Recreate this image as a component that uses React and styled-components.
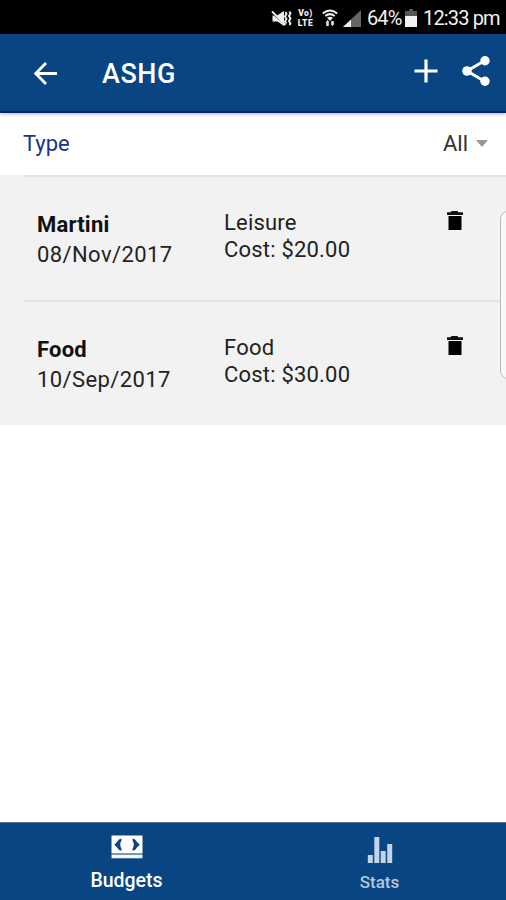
import React from 'react'
import styled, { createGlobalStyle } from 'styled-components'

const GlobalStyle = createGlobalStyle`
  * {
    box-sizing: border-box;
  }
  body {
    margin: 0;
    background: #fff;
    font-family: Roboto, 'Noto Sans', sans-serif;
    overflow: hidden;
  }
  svg {
    display: block;
    flex: none;
  }
`
const Screen = styled.div`
  position: relative;
  display: flex;
  flex-direction: column;
  width: 506px;
  height: 900px;
  background: #fff;
  overflow: hidden;
`
const StatusBar = styled.div`
  display: flex;
  flex: none;
  align-items: center;
  height: 34px;
  padding: 2px 0 0 271px;
  background: #000;
  color: #f2f2f2;
`
const StatusIcon = styled.svg`
  margin-right: ${(props) => props.$gap}px;
`
const Network = styled.div`
  display: flex;
  flex-direction: column;
  width: 19px;
  margin-right: 7px;
  font-size: 8.5px;
  font-weight: 900;
  line-height: 10px;
  letter-spacing: 0.5px;
  text-align: center;
`
const StatusText = styled.span`
  width: ${(props) => props.$width}px;
  margin-right: 4px;
  font-size: 20px;
  line-height: 24px;
  letter-spacing: ${(props) => props.$spacing}px;
  white-space: nowrap;
`
const Header = styled.header`
  position: relative;
  z-index: 1;
  display: flex;
  flex: none;
  align-items: center;
  height: 79px;
  padding: 0 15px 0 33px;
  border-bottom: 2px solid #06207a;
  background: #084582;
  box-shadow: 0 1px 4px rgba(0, 0, 0, 0.3);
  color: #fff;
`
const Title = styled.h1`
  flex: 1;
  margin: 3px 0 0 44px;
  font-size: 27px;
  font-weight: 500;
  line-height: 32px;
  letter-spacing: 0.5px;
`
const HeaderActions = styled.div`
  display: flex;
  align-items: center;
  gap: 23px;
  padding-bottom: 3px;
`
const Filter = styled.div`
  display: flex;
  flex: none;
  align-items: center;
  justify-content: space-between;
  height: 62px;
  margin-left: 23px;
  padding: 0 18px 2px 0;
`
const FilterLabel = styled.span`
  color: #1b3485;
  font-size: 22px;
`
const Select = styled.div`
  display: flex;
  align-items: center;
  gap: 8px;
  color: #333;
  font-size: 22px;
`
const Arrow = styled.i`
  border: 6.5px solid transparent;
  border-top: 7px solid #999;
  border-bottom: 0;
`
const List = styled.div`
  background: #f2f2f2;
`
const Item = styled.div`
  display: grid;
  grid-template-columns: 187px 1fr 18px;
  height: 125px;
  margin-left: 24px;
  padding: 34px 42px 0 13px;
  border-top: 2px solid #e3e3e3;
  color: #222;
  font-size: 22px;
`
const Details = styled.div`
  margin-top: -${(props) => props.$lift}px;
`
const Name = styled.div`
  color: #111;
  font-weight: 700;
  line-height: 30px;
  letter-spacing: 0.2px;
`
const Line = styled.div`
  line-height: ${(props) => props.$height || 27}px;
  letter-spacing: ${(props) => props.$spacing || 0}px;
  white-space: nowrap;
`
const Handle = styled.div`
  position: absolute;
  top: 211px;
  left: 500px;
  width: 20px;
  height: 168px;
  border: 1px solid #bbb;
  border-radius: 8px;
  background: #f8f8f8;
`
const TabBar = styled.nav`
  display: grid;
  grid-template-columns: 1fr 1fr;
  height: 78px;
  margin-top: auto;
  border-top: 1px solid #5c7392;
  background: #084582;
`
const Tab = styled.div`
  display: flex;
  flex-direction: column;
  align-items: center;
  color: ${(props) => (props.$active ? '#fff' : '#b4c7dc')};
`
const TabLabel = styled.span`
  margin-top: ${(props) => props.$top}px;
  font-size: ${(props) => props.$size}px;
  font-weight: 500;
  line-height: 24px;
`

const items = [
  { name: 'Martini', date: '08/Nov/2017', type: 'Leisure', cost: '$20.00' },
  { name: 'Food', date: '10/Sep/2017', type: 'Food', cost: '$30.00' },
]

const Trash = () => (
  <svg width="18" height="20" viewBox="0 0 18 20">
    <path d="M5.5 0h6l1 1.3H17V4H1V1.3h3.5z" fill="#111" />
    <path d="M2.5 5h13v13.5q0 .5-.5.5H3q-.5 0-.5-.5z" />
  </svg>
)

export default function App() {
  return (
    <>
      <GlobalStyle />
      <Screen>
        <StatusBar>
          <StatusIcon $gap={4} width="21" height="18" viewBox="0 0 21 18">
            <path d="M1.5 6.5H6L13 2v15l-6.5-4.5h-5z" fill="#eee" />
            <path d="M1 4l12 10.5" stroke="#000" strokeWidth="1.2" />
            <path d="M1 2.5L14.5 16" stroke="#eee" strokeWidth="1.8" />
            <path
              d="M14.5 3l1 2-1.5 2.5 1.5 2.5-1.5 2.5 1.5 2M18.5 2.5l1 2-1.5 2.5 1.5 2.5-1.5 2.5 1.5 2.5-1 1.5"
              fill="none"
              stroke="#eee"
              strokeWidth="1.9"
            />
          </StatusIcon>
          <Network>
            <span>Vo)</span>
            <span>LTE</span>
          </Network>
          <StatusIcon $gap={5} width="16" height="18" viewBox="0 0 16 18">
            <path
              d="M.8 4.5q7.2-6 14.4 0M3.3 7q4.7-3.8 9.4 0"
              fill="none"
              stroke="#eee"
              strokeWidth="2"
            />
            <path d="M5 8.8q3-2 6 0L8 12z" fill="#eee" />
            <path d="M3.5 13.5L5.5 11l2 2.5h-.7V17H4.2v-3.5zM8.5 14.5h.7V12h2.6v2.5h.7l-2 2.7z" fill="#ddd" />
          </StatusIcon>
          <StatusIcon $gap={6} width="18" height="17" viewBox="0 0 18 17">
            <path d="M18 0v17H0z" fill="#666" />
            <path d="M8 9.4V17H0z" fill="#eee" />
          </StatusIcon>
          <StatusText $width={34} $spacing={-0.9}>
            64%
          </StatusText>
          <StatusIcon $gap={6} width="12" height="18" viewBox="0 0 12 18">
            <path d="M4 0h4v2h4v5H0V2h4z" fill="#555" />
            <path d="M0 7h12v11H0z" fill="#f2f2f2" />
          </StatusIcon>
          <StatusText $width={78} $spacing={-0.85}>
            12:33 pm
          </StatusText>
        </StatusBar>
        <Header>
          <svg width="25" height="24" viewBox="0 0 25 24">
            <path
              d="M24 12.5H3M13 2L2.7 12.5 13 23"
              fill="none"
              stroke="#fff"
              strokeWidth="2.8"
            />
          </svg>
          <Title>ASHG</Title>
          <HeaderActions>
            <svg width="24" height="24" viewBox="0 0 24 24">
              <path d="M12 .5v23M.5 12h23" stroke="#fff" strokeWidth="3.2" />
            </svg>
            <svg width="30" height="32" viewBox="0 0 30 32">
              <path d="M24 5.5L6 16l18 10.5" fill="none" stroke="#fff" strokeWidth="3" />
              <circle cx="24" cy="5.7" r="4.7" fill="#fff" />
              <circle cx="6" cy="16" r="4.8" fill="#fff" />
              <circle cx="24" cy="26.3" r="4.7" fill="#fff" />
            </svg>
          </HeaderActions>
        </Header>
        <Filter>
          <FilterLabel>Type</FilterLabel>
          <Select>
            All
            <Arrow />
          </Select>
        </Filter>
        <List>
          {items.map((item) => (
            <Item key={item.name}>
              <Details $lift={1}>
                <Name>{item.name}</Name>
                <Line $height={30} $spacing={0.4}>
                  {item.date}
                </Line>
              </Details>
              <Details $lift={2}>
                <Line $spacing={0.2}>{item.type}</Line>
                <Line $spacing={0.2}>Cost: {item.cost}</Line>
              </Details>
              <Trash />
            </Item>
          ))}
        </List>
        <Handle />
        <TabBar>
          <Tab $active>
            <svg width="32" height="36" viewBox="0 0 32 36">
              <path d="M.5 12.5h31v18H.5z" fill="#fff" />
              <path d="M.5 30.5h31V32H.5z" fill="#7895b7" />
              <path d="M.5 32h31v3.3H.5z" fill="#f2f5f9" />
              <path
                d="M10.5 15.5q-3 .3-4.5 3.5L3.3 21.7 6 24.500q1.500 3 4.500 3.300v-2q-2.500-4.300 0-8.300zM21.500 15.500q3 .3 4.500 3.500l2.700 2.700L26 24.500q-1.500 3-4.500 3.300v-2q2.500-4.300 0-8.300z"
                fill="#084582"
              />
            </svg>
            <TabLabel $top={10} $size={19.5}>
              Budgets
            </TabLabel>
          </Tab>
          <Tab>
            <svg width="26" height="40" viewBox="0 0 26 40">
              <path
                d="M.8 32h5v8h-5zM7.3 14h5v26h-5zM13.7 28h5v12h-5zM20.200 21h5v19h-5z"
                fill="#c1d4e8"
              />
            </svg>
            <TabLabel $top={7} $size={17}>
              Stats
            </TabLabel>
          </Tab>
        </TabBar>
      </Screen>
    </>
  )
}
